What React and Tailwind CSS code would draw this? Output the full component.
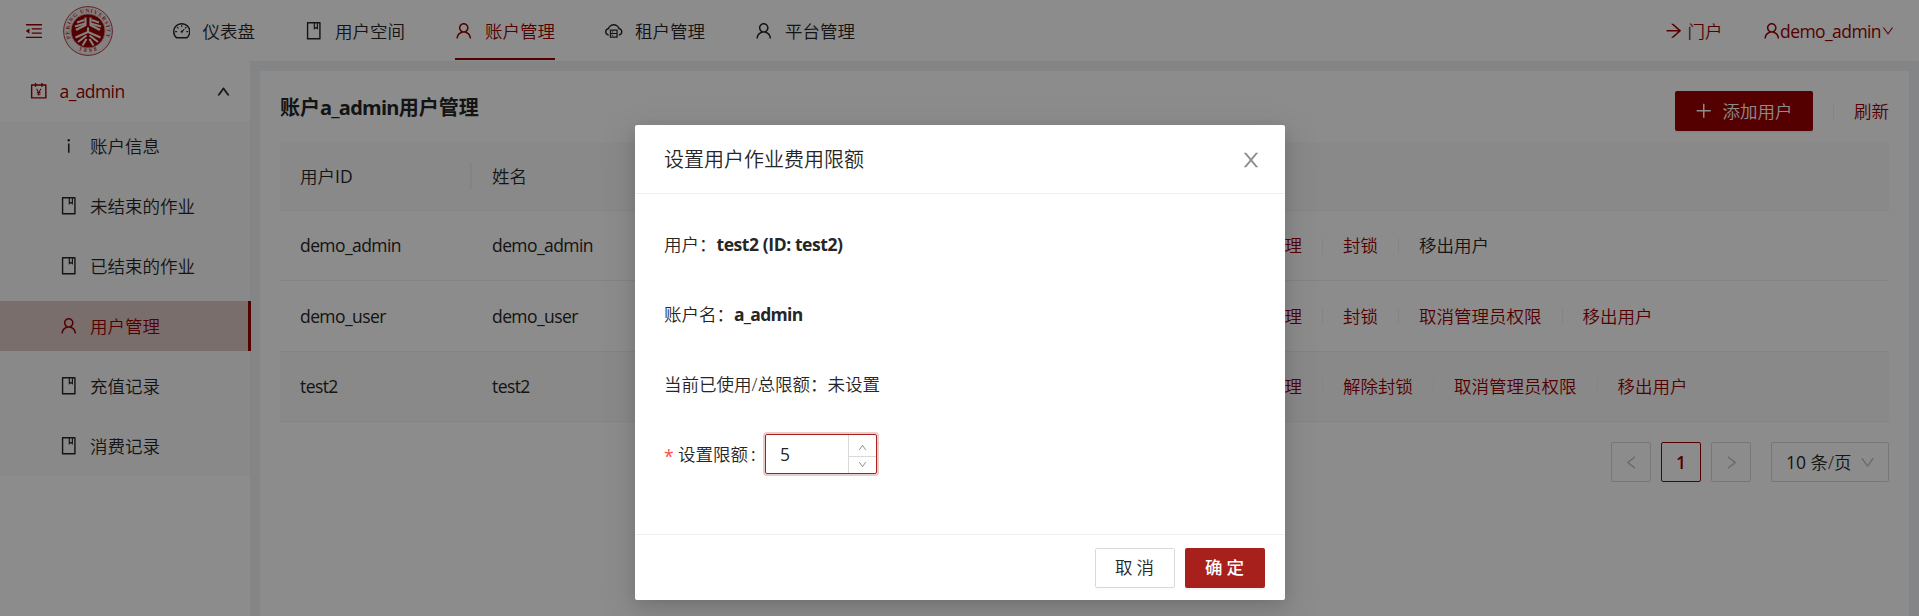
import {
  AiOutlineMenuFold,
  AiOutlineDashboard,
  AiOutlineBook,
  AiOutlineUser,
  AiOutlineCloudServer,
  AiOutlineArrowRight,
  AiOutlineDown,
  AiOutlineUp,
  AiOutlineLeft,
  AiOutlineRight,
  AiOutlineAccountBook,
  AiOutlineInfo,
  AiOutlinePlus,
} from "react-icons/ai";

// Icons are drawn without the outer margin of their 1024-unit grid.
function Icon({ as: Shape, className = "size-[17.5px]" }) {
  return <Shape viewBox="64 64 896 896" className={`shrink-0 ${className}`} />;
}

function CloseIcon() {
  return (
    <svg viewBox="64 64 896 896" fill="currentColor" className="size-5 text-[#8c8c8c]">
      <path d="M563.8 512l262.5-312.9c4.4-5.2.7-13.1-6.1-13.1h-79.8c-4.7 0-9.2 2.1-12.3 5.7L511.6 449.8 295.1 191.7c-3-3.6-7.5-5.7-12.3-5.7H203c-6.8 0-10.5 7.9-6.1 13.1L459.4 512 196.9 824.9A7.95 7.95 0 0 0 203 838h79.8c4.7 0 9.2-2.1 12.3-5.7l216.5-258.1 216.5 258.1c3 3.6 7.5 5.7 12.3 5.7h79.8c6.8 0 10.5-7.9 6.1-13.1L563.8 512z" />
    </svg>
  );
}

function Latin({ children, className = "" }) {
  return <span className={`font-normal tracking-[-0.58px] ${className}`}>{children}</span>;
}

function Logo() {
  return (
    <svg viewBox="0 0 100 100" className="size-[50px] shrink-0">
      <defs>
        <path id="ring" d="M 15.4 65 A 37.5 37.5 0 1 1 84.6 65" />
        <path id="ringBottom" d="M 22 82 A 43 43 0 0 0 78 82" />
      </defs>
      <circle cx="50" cy="50" r="48.8" fill="#f3eaea" stroke="#b23a3a" strokeWidth="2" />
      <circle cx="50" cy="50" r="34" fill="#9b0000" stroke="#d7a0a0" strokeWidth="2" />
      <text fontSize="11" fontWeight="700" fill="#b03030" fontFamily="Liberation Serif, serif">
        <textPath href="#ring" textLength="144" lengthAdjust="spacing">PEKING UNIVERSITY</textPath>
      </text>
      <text fontSize="11" fontWeight="700" fill="#b03030" fontFamily="Liberation Serif, serif">
        <textPath href="#ringBottom" startOffset="11" textLength="38" lengthAdjust="spacing">1898</textPath>
      </text>
      <g fill="none" stroke="#f3eaea" strokeWidth="4.2">
        <path d="M45 23 V38 L26 48" />
        <path d="M55 23 V38 L74 48" />
        <path d="M43 28 L28 33" />
        <path d="M57 28 L72 33" />
        <path d="M44 35 L24 41" />
        <path d="M56 35 L76 41" />
        <path d="M50 43 V52 L25 63" />
        <path d="M50 52 L75 63" />
        <path d="M47 59 L30 72" />
        <path d="M53 59 L70 72" />
        <path d="M47 66 L39 79" />
        <path d="M53 66 L61 79" />
      </g>
    </svg>
  );
}

const NAV = [
  { icon: AiOutlineDashboard, label: "仪表盘" },
  { icon: AiOutlineBook, label: "用户空间" },
  { icon: AiOutlineUser, label: "账户管理", active: true },
  { icon: AiOutlineCloudServer, label: "租户管理" },
  { icon: AiOutlineUser, label: "平台管理" },
];

function Header() {
  return (
    <header className="flex h-[61px] shrink-0 items-stretch bg-white px-[25px] shadow-[0_2px_8px_#f0f1f2]">
      <div className="flex items-center text-[#9b0000]">
        <Icon as={AiOutlineMenuFold} className="size-[18px]" />
        <div className="ml-5">
          <Logo />
        </div>
      </div>
      <nav className="ml-[59.5px] flex gap-[50px]">
        {NAV.map(({ icon, label, active }) => (
          <div
            key={label}
            className={`mb-px flex items-center gap-[12.5px] border-b-2 pt-[4px] ${
              active ? "border-[#9b0000] text-[#9b0000]" : "border-transparent"
            }`}
          >
            <Icon as={icon} />
            <span>{label}</span>
          </div>
        ))}
      </nav>
      <div className="ml-auto flex items-center pt-px text-[#9b0000]">
        <Icon as={AiOutlineArrowRight} />
        <span className="ml-[5px]">门户</span>
        <Icon as={AiOutlineUser} className="ml-[40px] size-[17.5px]" />
        <Latin>demo_admin</Latin>
        <Icon as={AiOutlineDown} className="ml-px size-3" />
      </div>
    </header>
  );
}

const MENU = [
  { icon: AiOutlineInfo, label: "账户信息" },
  { icon: AiOutlineBook, label: "未结束的作业" },
  { icon: AiOutlineBook, label: "已结束的作业" },
  { icon: AiOutlineUser, label: "用户管理", active: true },
  { icon: AiOutlineBook, label: "充值记录" },
  { icon: AiOutlineBook, label: "消费记录" },
];

function Sidebar() {
  return (
    <aside className="w-[250px] shrink-0 bg-white">
      <div className="flex h-[60px] items-center pl-[30px] pr-[20px] text-[#9b0000]">
        <Icon as={AiOutlineAccountBook} />
        <Latin className="ml-3">a_admin</Latin>
        <Icon as={AiOutlineUp} className="ml-auto size-[13px] stroke-[50] text-[#262626]" />
      </div>
      <ul className="flex h-[355px] flex-col gap-[10px] bg-[#fafafa]">
        {MENU.map(({ icon, label, active }) => (
          <li
            key={label}
            className={`flex h-[50px] shrink-0 items-center gap-[12.5px] pl-[60px] ${
              active ? "mr-[-1px] border-r-[3px] border-[#9b0000] bg-[#dcc8c5] text-[#9b0000]" : ""
            }`}
          >
            <Icon as={icon} />
            <span>{label}</span>
          </li>
        ))}
      </ul>
    </aside>
  );
}

const USERS = [
  { id: "demo_admin", name: "demo_admin", actions: ["作业费用限额管理", "封锁", "移出用户"], locked: true, height: "h-[70px]" },
  { id: "demo_user", name: "demo_user", actions: ["作业费用限额管理", "封锁", "取消管理员权限", "移出用户"], height: "h-[71px]" },
  {
    id: "test2",
    name: "test2",
    actions: ["作业费用限额管理", "解除封锁", "取消管理员权限", "移出用户"],
    hovered: true,
    height: "h-[70px]",
  },
];

function UserTable() {
  return (
    <div>
      <div className="flex h-[69px] items-center border-b border-[#f0f0f0] bg-[#fafafa]">
        <div className="flex h-7 w-[192px] items-center border-r-2 border-[#f0f0f0] pl-5">
          用户<span className="font-normal">ID</span>
        </div>
        <div className="pl-5">姓名</div>
      </div>
      {USERS.map((user) => (
        <div
          key={user.id}
          className={`flex items-center border-b border-[#f0f0f0] ${user.height} ${user.hovered ? "bg-[#fafafa]" : ""}`}
        >
          <div className="w-[192px] pl-5">
            <Latin>{user.id}</Latin>
          </div>
          <div className="w-[690px] pl-5">
            <Latin>{user.name}</Latin>
          </div>
          <div className="flex items-center text-[#9b0000]">
            {user.actions.map((action, i) => (
              <div key={action} className="flex items-center">
                {i > 0 && <span className="mx-5 h-4 w-px bg-[#f0f0f0]" />}
                <span className={user.locked && i === 2 ? "text-[#262626]" : ""}>{action}</span>
              </div>
            ))}
          </div>
        </div>
      ))}
    </div>
  );
}

function Pagination() {
  return (
    <div className="mt-5 flex justify-end gap-[10px]">
      <div className="flex size-10 items-center justify-center rounded-[2px] border border-[#d9d9d9] text-[#bfbfbf]">
        <Icon as={AiOutlineLeft} className="size-[15px]" />
      </div>
      <div className="flex size-10 items-center justify-center rounded-[2px] border border-[#9b0000] font-semibold text-[#9b0000]">
        1
      </div>
      <div className="flex size-10 items-center justify-center rounded-[2px] border border-[#d9d9d9] text-[#bfbfbf]">
        <Icon as={AiOutlineRight} className="size-[15px]" />
      </div>
      <div className="ml-[10px] flex h-10 w-[118px] items-center justify-between rounded-[2px] border border-[#d9d9d9] pl-[14px] pr-[13px]">
        <span className="whitespace-nowrap">
          <span className="font-normal">10 </span>条/页
        </span>
        <Icon as={AiOutlineDown} className="size-[15px] text-[#bfbfbf]" />
      </div>
    </div>
  );
}

function Content() {
  return (
    <main className="mx-[10px] mt-[10px] flex-1 bg-white px-5 pt-5">
      <div className="flex h-[51px] items-start justify-between">
        <h1 className="pt-[2px] text-[20px] font-bold leading-[30px]">
          账户<span className="tracking-[-0.75px]">a_admin</span>用户管理
        </h1>
        <div className="flex items-center">
          <button className="flex h-10 w-[138px] items-center rounded-[2px] bg-[#9b0000] pl-5 text-white shadow-[0_2px_0_rgba(0,0,0,0.045)]">
            <Icon as={AiOutlinePlus} />
            <span className="ml-[10px]">添加用户</span>
          </button>
          <span className="mx-5 h-4 w-px bg-[#f0f0f0]" />
          <span className="text-[#9b0000]">刷新</span>
        </div>
      </div>
      <UserTable />
      <Pagination />
    </main>
  );
}

function LimitModal() {
  return (
    <div
      role="dialog"
      className="absolute left-[635px] top-[125px] flex h-[475px] w-[650px] flex-col rounded-[2px] bg-white shadow-[0_4px_15px_-5px_rgba(0,0,0,0.12),0_8px_20px_rgba(0,0,0,0.08),0_11px_35px_10px_rgba(0,0,0,0.05)]"
    >
      <div className="flex h-[69px] shrink-0 items-center justify-between border-b border-[#f0f0f0] pl-[29px] pr-6 pt-px">
        <h2 className="text-[20px]">设置用户作业费用限额</h2>
        <CloseIcon />
      </div>
      <div className="flex flex-1 flex-col gap-[30px] px-[29px] pt-[30px]">
        <div className="flex h-10 items-center">
          用户：<strong className="font-bold tracking-[-0.42px]">test2 (ID: test2)</strong>
        </div>
        <div className="flex h-10 items-center">
          账户名：<strong className="font-bold tracking-[-0.7px]">a_admin</strong>
        </div>
        <div className="flex h-10 items-center">当前已使用/总限额：未设置</div>
        <div className="flex h-10 items-center">
          <span className="mr-[5px] w-[9px] pt-1 font-normal text-[#ff4d4f]">*</span>
          <span className="w-[87px] whitespace-nowrap">
            设置限额<span className="ml-[3px] font-normal">:</span>
          </span>
          <div className="flex h-10 w-[112px] rounded-[2px] border border-[#a8201c] shadow-[0_0_0_2px_rgba(155,0,0,0.2)]">
            <div className="flex flex-1 items-center pl-[14px]">
              <Latin>5</Latin>
            </div>
            <div className="flex w-[28px] flex-col border-l border-[#d9d9d9] text-[#8c8c8c]">
              <div className="flex flex-1 items-center justify-center border-b border-[#d9d9d9] pt-1">
                <Icon as={AiOutlineUp} className="size-[9px]" />
              </div>
              <div className="flex flex-1 items-center justify-center">
                <Icon as={AiOutlineDown} className="size-[9px]" />
              </div>
            </div>
          </div>
        </div>
      </div>
      <div className="flex h-[66px] shrink-0 items-center justify-end gap-[10px] border-t border-[#f0f0f0] px-5">
        <button className="h-10 w-20 rounded-[2px] border border-[#d9d9d9] pl-[3px] tracking-[4px] shadow-[0_2px_0_rgba(0,0,0,0.015)]">
          取消
        </button>
        <button className="h-10 w-20 rounded-[2px] bg-[#a8201c] pl-[3px] font-medium tracking-[4px] text-white shadow-[0_2px_0_rgba(0,0,0,0.045)]">
          确定
        </button>
      </div>
    </div>
  );
}

export default function App() {
  return (
    <div className="relative flex h-[616px] w-full flex-col overflow-hidden bg-[#f0f2f5] font-['Open_Sans','Noto_Sans_CJK_SC',sans-serif] text-[17.5px] font-[350] leading-[27px] text-[#262626]">
      <Header />
      <div className="flex flex-1">
        <Sidebar />
        <Content />
      </div>
      <div className="absolute inset-0 bg-black/45" />
      <LimitModal />
    </div>
  );
}
